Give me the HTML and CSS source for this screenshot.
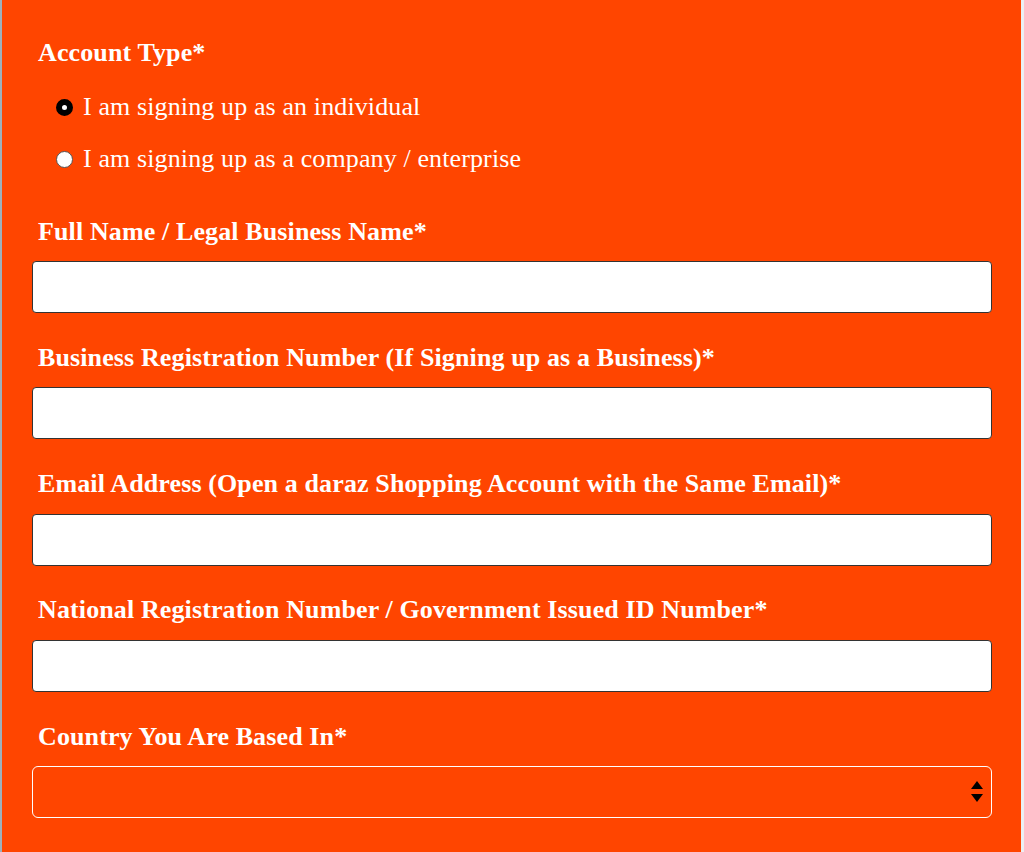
FILE: index.html
```html
<!DOCTYPE html>
<html lang="en">
<head>
<meta charset="UTF-8" />
<meta name="viewport" content="width=device-width, initial-scale=1" />
<title>Seller Sign Up</title>
<link rel="stylesheet" href="styles.css">
</head>
<body>

<form class="signup">
  <div class="field-label">Account Type*</div>
  <div class="radio-group">
    <label class="radio-row">
      <input type="radio" name="accountType" value="individual" checked />
      I am signing up as an individual
    </label>
    <label class="radio-row">
      <input type="radio" name="accountType" value="company" />
      I am signing up as a company / enterprise
    </label>
  </div>

  <div class="field">
    <label class="field-label" for="fullName">Full Name / Legal Business Name*</label>
    <input class="text-input" type="text" id="fullName" />
  </div>

  <div class="field">
    <label class="field-label" for="regNumber">Business Registration Number (If Signing up as a Business)*</label>
    <input class="text-input" type="text" id="regNumber" />
  </div>

  <div class="field">
    <label class="field-label" for="email">Email Address (Open a daraz Shopping Account with the Same Email)*</label>
    <input class="text-input" type="email" id="email" />
  </div>

  <div class="field">
    <label class="field-label" for="nationalId">National Registration Number / Government Issued ID Number*</label>
    <input class="text-input" type="text" id="nationalId" />
  </div>

  <div class="field">
    <label class="field-label" for="country">Country You Are Based In*</label>
    <div class="select-wrap">
      <select class="select-input" id="country">
        <option value=""></option>
      </select>
      <!-- flechas arriba/abajo del select -->
      <svg class="select-arrows" width="12" height="22" viewBox="0 0 12 22" aria-hidden="true">
        <path d="M6 0 L12 8 L0 8 Z" fill="#000"/>
        <path d="M0 13 L12 13 L6 21 Z" fill="#000"/>
      </svg>
    </div>
  </div>
</form>

</body>
</html>
```

FILE: styles.css
```css
body {
  margin: 0;
  padding: 0;
  background: #eceff2;
  border-left: 2px solid #9fb0bb;
  font-family: "Liberation Serif", "Times New Roman", serif;
  color: #fff;
}
.signup {
  background: #ff4500;
  margin-right: 3px;
  padding: 38px 29px 40px 30px;
  min-height: 852px;
  box-sizing: border-box;
}
.field-label {
  display: block;
  font-size: 26px;
  font-weight: 700;
  line-height: 30px;
  letter-spacing: 0.12px;
  margin-left: 6px;
  color: #fff;
}
.radio-group {
  display: flex;
  flex-direction: column;
  gap: 22px;
  margin: 24px 0 42.5px 24px;
}
.radio-row {
  display: flex;
  align-items: center;
  gap: 10px;
  font-size: 26px;
  line-height: 30px;
  letter-spacing: 0.12px;
  cursor: pointer;
}
.radio-row input {
  appearance: none;
  -webkit-appearance: none;
  margin: 0;
  width: 17px;
  height: 17px;
  border-radius: 50%;
  border: 1px solid #555;
  background: #fff;
  box-sizing: border-box;
}
.radio-row input:checked {
  border: 6px solid #000;
}
.field {
  margin-bottom: 29.75px;
}
.field .field-label {
  margin-bottom: 14.5px;
}
.text-input {
  display: block;
  width: 100%;
  height: 52px;
  box-sizing: border-box;
  border: 1px solid #333;
  border-radius: 4px;
  background: #fff;
  padding: 0 10px;
  font-size: 20px;
  font-family: inherit;
}
.select-wrap {
  position: relative;
}
.select-input {
  appearance: none;
  -webkit-appearance: none;
  display: block;
  width: 100%;
  height: 52px;
  box-sizing: border-box;
  border: 1px solid #fff;
  border-radius: 6px;
  background: transparent;
  color: #000;
  padding: 0 40px 0 10px;
  font-size: 20px;
  font-family: inherit;
}
.select-arrows {
  position: absolute;
  right: 9px;
  top: 15px;
  pointer-events: none;
}
```
